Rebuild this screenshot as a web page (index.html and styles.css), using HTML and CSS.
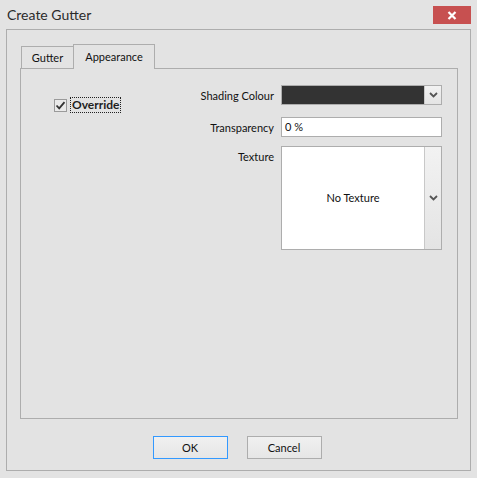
FILE: index.html
```html
<!DOCTYPE html>
<html lang="en">
<head>
<meta charset="utf-8">
<title>Create Gutter</title>
<link rel="stylesheet" href="styles.css">
</head>
<body>
<div class="dialog">
  <header class="titlebar">
    <span class="title">Create Gutter</span>
    <button class="close" aria-label="Close">
      <svg width="10" height="9" viewBox="0 0 10 9"><path d="M1.5 1 L8.5 8 M8.5 1 L1.5 8" stroke="#fff" stroke-width="2.2" fill="none"/></svg>
    </button>
  </header>

  <section class="frame">
    <div class="tabs">
      <div class="tab tab-gutter">Gutter</div>
      <div class="tab tab-appearance active">Appearance</div>
    </div>
    <div class="panel">
      <label class="override">
        <span class="check">
          <svg width="11" height="11" viewBox="0 0 11 11"><path d="M1.5 5.5 L4.2 8.3 L9.5 2.2" stroke="#333" stroke-width="1.8" fill="none"/></svg>
        </span>
        <span class="focus">Override</span>
      </label>

      <div class="form">
        <span class="label">Shading Colour</span>
        <div class="combo">
          <div class="swatch"></div>
          <div class="drop">
            <svg width="9" height="6" viewBox="0 0 9 6"><path d="M1 1 L4.5 4.5 L8 1" stroke="#555" stroke-width="1.8" fill="none"/></svg>
          </div>
        </div>

        <span class="label">Transparency</span>
        <div class="input">0 %</div>

        <span class="label label-top">Texture</span>
        <div class="combo texture">
          <div class="preview">No Texture</div>
          <div class="drop">
            <svg width="9" height="6" viewBox="0 0 9 6"><path d="M1 1 L4.5 4.5 L8 1" stroke="#555" stroke-width="1.8" fill="none"/></svg>
          </div>
        </div>
      </div>
    </div>

    <div class="buttons">
      <button class="btn default">OK</button>
      <button class="btn">Cancel</button>
    </div>
  </section>
</div>
</body>
</html>
```

FILE: styles.css
```css
html, body {
  margin: 0;
  padding: 0;
  background: #e3e3e3;
}

body {
  font-family: Lato, "Noto Sans", sans-serif;
  font-size: 11px;
  color: #111;
  width: 477px;
  height: 478px;
  overflow: hidden;
}

.dialog {
  display: flex;
  flex-direction: column;
  height: 478px;
}

/* window caption */
.titlebar {
  height: 29px;
  display: flex;
  align-items: flex-start;
  justify-content: space-between;
}

.title {
  font-size: 14px;
  color: #2b2b2b;
  margin: 5px 0 0 7px;
  line-height: 20px;
}

.close {
  width: 38px;
  height: 18px;
  margin: 6px 6px 0 0;
  padding: 0;
  border: 0;
  background: #c75050;
  display: flex;
  align-items: center;
  justify-content: center;
}

/* outer group box */
.frame {
  margin: 0 6px 7px 6px;
  height: 442px;
  box-sizing: border-box;
  border: 1px solid #adadad;
  padding: 14px 12px 0 13px;
  display: flex;
  flex-direction: column;
}

.tabs {
  display: flex;
  align-items: flex-end;
  height: 24px;
  padding-left: 1px;
  position: relative;
  z-index: 1;
}

.tab {
  border: 1px solid #adadad;
  border-bottom: 0;
  height: 22px;
  box-sizing: border-box;
  text-align: center;
  line-height: 22px;
  background: #e3e3e3;
}

.tab + .tab {
  margin-left: -1px;
}

.tab-gutter {
  width: 53px;
}

.tab-appearance {
  width: 82px;
}

.tab.active {
  height: 25px;
  margin-bottom: -1px;
  line-height: 23px;
}

.panel {
  border: 1px solid #adadad;
  height: 351px;
  box-sizing: border-box;
  display: flex;
  justify-content: space-between;
  padding: 16px 15px 0 33px;
}

/* checkbox */
.override {
  display: flex;
  align-items: center;
  align-self: flex-start;
  margin-top: 12px;
  font-weight: bold;
  font-size: 12px;
  color: #1e1e1e;
}

.check {
  width: 13px;
  height: 13px;
  box-sizing: border-box;
  border: 1px solid #9a9a9a;
  background: #eaeaea;
  display: flex;
  align-items: center;
  justify-content: center;
  margin-right: 3px;
}

.focus {
  border: 1px dotted #222;
  padding: 0 1px;
  line-height: 14px;
}

/* field grid */
.form {
  display: grid;
  grid-template-columns: auto 161px;
  grid-template-rows: 20px 20px 104px;
  row-gap: 12px;
  column-gap: 7px;
  align-content: start;
}

.label {
  text-align: right;
  align-self: center;
  white-space: nowrap;
}

.label-top {
  align-self: start;
  margin-top: 1px;
}

.combo {
  display: flex;
  border: 1px solid #adadad;
  box-sizing: border-box;
  background: #fff;
}

.texture {
  align-self: start;
  height: 104px;
  margin-top: -3px;
}

.swatch {
  flex: 1;
  background: #333333;
}

.drop {
  width: 16px;
  border-left: 1px solid #c8c8c8;
  background: linear-gradient(#f2f2f2, #e4e4e4);
  display: flex;
  align-items: center;
  justify-content: center;
}

.input {
  border: 1px solid #adadad;
  box-sizing: border-box;
  background: #fff;
  padding-left: 3px;
  line-height: 18px;
}

.preview {
  flex: 1;
  display: flex;
  align-items: center;
  justify-content: center;
  padding-bottom: 2px;
}

/* dialog buttons */
.buttons {
  display: flex;
  justify-content: center;
  gap: 19px;
  margin-top: 17px;
  padding-right: 4px;
}

.btn {
  width: 75px;
  height: 23px;
  border: 1px solid #adadad;
  background: linear-gradient(#f0f0f0, #e6e6e6);
  font-family: inherit;
  font-size: 11px;
  color: #111;
  padding: 0;
}

.btn.default {
  border-color: #3399ff;
}
```
